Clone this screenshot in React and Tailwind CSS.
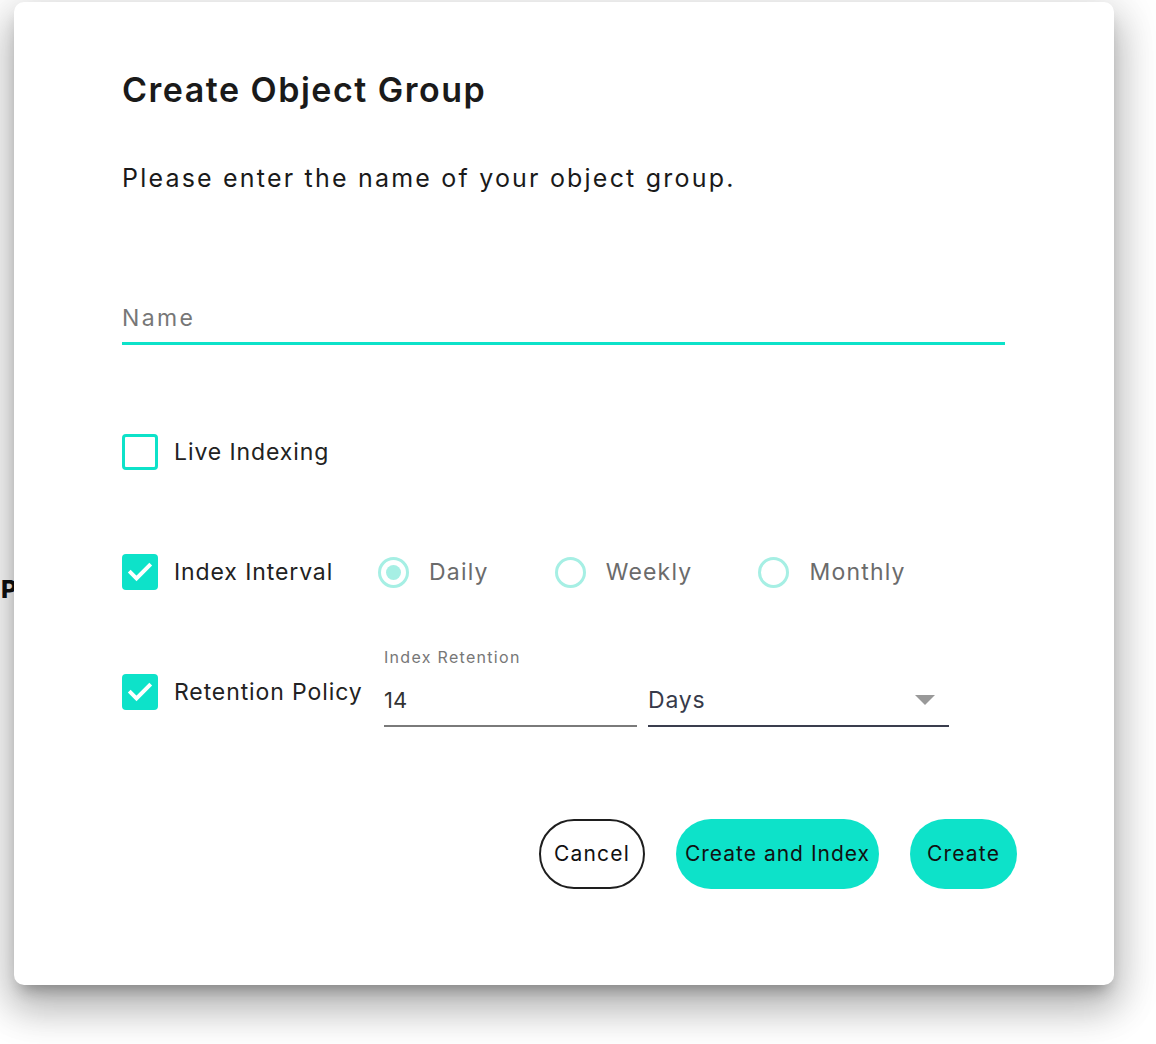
import { useState } from "react";

const TEAL = "bg-[#0de2c9]";

function CheckBox({ checked }) {
  return checked ? (
    <div className={`w-[36px] h-[36px] rounded-[4px] ${TEAL} flex items-center justify-center shrink-0`}>
      <svg width="28" height="28" viewBox="0 0 24 24">
        <path d="M4 12.5l5 5L20 6.5" fill="none" stroke="#fff" strokeWidth="3.4" strokeLinecap="square" />
      </svg>
    </div>
  ) : (
    <div className="w-[36px] h-[36px] rounded-[4px] border-[3px] border-[#0de2c9] bg-white shrink-0" />
  );
}

function Radio({ label, selected }) {
  return (
    <div className="flex items-center gap-[20px]">
      <div className="w-[31px] h-[31px] rounded-full border-[3px] border-[#a6efe4] flex items-center justify-center">
        {selected && <div className="w-[15px] h-[15px] rounded-full bg-[#a6efe4]" />}
      </div>
      <span className="text-[23px] leading-[28px] tracking-[1.2px] text-[#6b6b6b]">{label}</span>
    </div>
  );
}

export default function App() {
  const [name, setName] = useState("");

  return (
    <div className="relative w-[1156px] h-[1044px] bg-white overflow-hidden font-['Inter',sans-serif]">
      {/* page behind the dialog */}
      <div className="pt-[574px] pl-[1px]">
        <h3 className="text-[25px] font-extrabold text-[#111] leading-[30px]">Properties</h3>
      </div>

      {/* dialog */}
      <div className="absolute left-[14px] top-[2px] w-[1100px] h-[983px] bg-white rounded-[10px] shadow-[0_11px_15px_-7px_rgba(0,0,0,0.3),0_24px_38px_3px_rgba(0,0,0,0.2),0_9px_46px_8px_rgba(0,0,0,0.14)] pl-[108px] pr-[109px] pt-[68px] flex flex-col">
        <h2 className="text-[34px] leading-[40px] font-semibold tracking-[1.5px] text-[#1a1a1a]">Create Object Group</h2>
        <p className="mt-[52px] text-[25px] leading-[32px] tracking-[2.2px] text-[#1a1a1a]">
          Please enter the name of your object group.
        </p>

        <input
          value={name}
          onChange={(e) => setName(e.target.value)}
          placeholder="Name"
          className="mt-[110px] w-full pb-[10px] text-[23px] leading-[28px] tracking-[2.4px] text-[#222] placeholder:text-[#777] border-b-[3px] border-[#0de2c9] outline-none bg-transparent"
        />

        {/* Live Indexing */}
        <div className="mt-[89px] flex items-center gap-[16px]">
          <CheckBox checked={false} />
          <span className="text-[23px] leading-[28px] tracking-[0.9px] text-[#222]">Live Indexing</span>
        </div>

        {/* Index Interval */}
        <div className="mt-[84px] flex items-center">
          <CheckBox checked />
          <span className="ml-[16px] w-[204px] whitespace-nowrap text-[23px] leading-[28px] tracking-[0.9px] text-[#222]">Index Interval</span>
          <div className="flex items-center gap-[66px]">
            <Radio label="Daily" selected />
            <Radio label="Weekly" />
            <Radio label="Monthly" />
          </div>
        </div>

        {/* Retention Policy */}
        <div className="mt-[56px] flex items-start">
          <div className="mt-[28px] flex items-center">
            <CheckBox checked />
            <span className="ml-[16px] w-[210px] whitespace-nowrap text-[23px] leading-[28px] tracking-[0.9px] text-[#222]">Retention Policy</span>
          </div>
          <div className="w-[253px] flex flex-col">
            <span className="text-[16px] leading-[22px] tracking-[1.3px] text-[#777]">Index Retention</span>
            <div className="mt-[18px] pb-[11px] border-b-2 border-[#7a7a7a] text-[22px] leading-[28px] text-[#333]">14</div>
          </div>
          <div className="ml-[11px] w-[301px] mt-[40px] pb-[11px] border-b-2 border-[#3a3d4d] flex items-center justify-between">
            <span className="text-[23px] leading-[28px] tracking-[0.8px] text-[#373a4a]">Days</span>
            <svg width="20" height="10" viewBox="0 0 20 10" className="mr-[14px]">
              <path d="M0 0h20L10 10z" fill="#999" />
            </svg>
          </div>
        </div>

        {/* actions */}
        <div className="mt-[92px] mr-[-12px] flex justify-end gap-[31px]">
          <button className="h-[70px] w-[106px] rounded-full border-2 border-[#1e1e1e] bg-white text-[21px] tracking-[1.2px] text-[#111]">
            Cancel
          </button>
          <button className={`h-[70px] w-[203px] rounded-full ${TEAL} text-[21px] tracking-[1px] text-[#111]`}>
            Create and Index
          </button>
          <button className={`h-[70px] w-[107px] rounded-full ${TEAL} text-[21px] tracking-[1.2px] text-[#111]`}>
            Create
          </button>
        </div>
      </div>
    </div>
  );
}
